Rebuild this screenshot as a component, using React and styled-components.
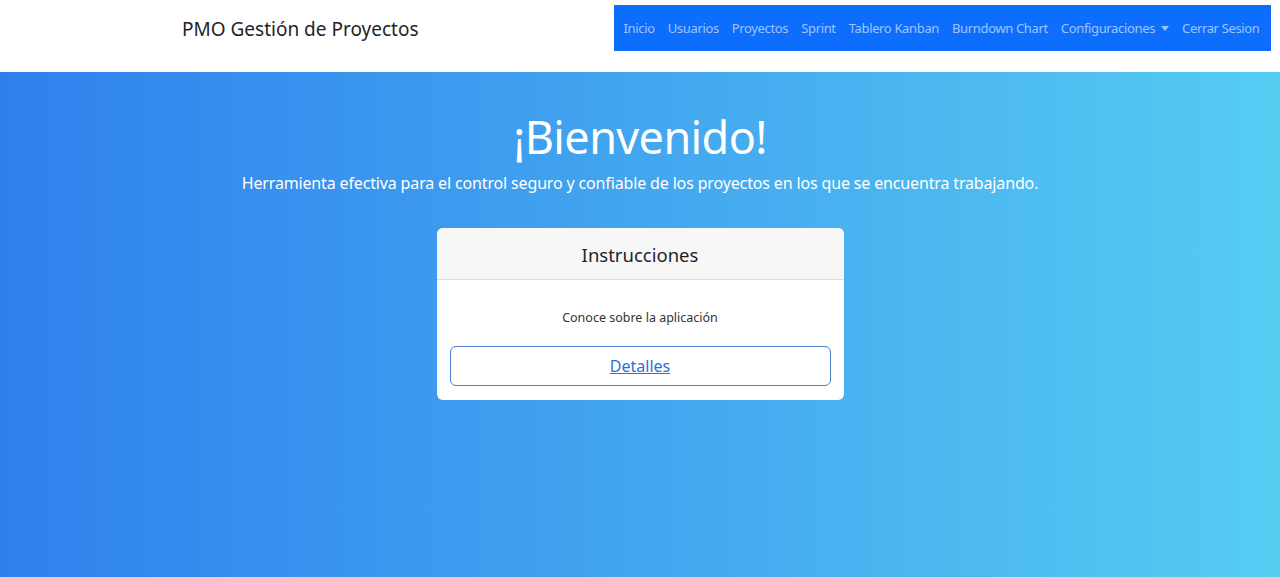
import styled, { createGlobalStyle } from "styled-components"

const Global = createGlobalStyle`
    html, body { margin: 0; padding: 0; }
    body {
        font-family: "Noto Sans", "Open Sans", sans-serif;
        color: #212529;
        background: #fff;
    }
    * { box-sizing: border-box; }
`

const Page = styled.div`
    min-height: 577px;
    display: flex;
    flex-direction: column;
`

const Header = styled.header`
    height: 72px;
    background: #fff;
    display: flex;
    align-items: flex-start;
    padding-left: 182px;
    padding-right: 9px;
    box-shadow: 0 1px 2px rgba(0,0,0,0.08);
`

const Brand = styled.a`
    font-size: 19px;
    color: #212529;
    text-decoration: none;
    line-height: 58px;
    white-space: nowrap;
`

const Nav = styled.nav`
    margin-left: auto;
    margin-top: 5px;
    height: 46px;
    background: #0d6efd;
    display: flex;
    align-items: center;
    padding: 0 5px 0 3px;
`

const NavLink = styled.a`
    font-size: 13px;
    letter-spacing: -0.35px;
    color: rgba(255,255,255,0.6);
    padding: 0 6.5px;
    text-decoration: none;
    white-space: nowrap;
    display: flex;
    align-items: center;
    gap: 6px;
`

const Caret = styled.span`
    display: inline-block;
    border-top: 5px solid rgba(255,255,255,0.6);
    border-left: 4px solid transparent;
    border-right: 4px solid transparent;
`

const Hero = styled.main`
    flex: 1;
    background: linear-gradient(to right, #2f80ed, #56ccf2);
    display: flex;
    flex-direction: column;
    align-items: center;
    padding-top: 37px;
    color: #fff;
`

const Title = styled.h1`
    margin: 0;
    font-size: 45px;
    font-weight: 400;
    line-height: 56px;
    letter-spacing: -0.6px;
`

const Lead = styled.p`
    margin: 7px 0 0;
    font-size: 16px;
    letter-spacing: -0.15px;
`

const Card = styled.section`
    margin-top: 34px;
    width: 407px;
    background: #fff;
    border-radius: 6px;
    overflow: hidden;
    color: #212529;
`

const CardHeader = styled.div`
    height: 52px;
    padding-top: 2px;
    background: #f7f7f7;
    border-bottom: 1px solid #dcdcdc;
    display: flex;
    align-items: center;
    justify-content: center;
    font-size: 18.5px;
`

const CardBody = styled.div`
    padding: 29px 13px 14px;
    display: flex;
    flex-direction: column;
    align-items: center;
`

const CardText = styled.p`
    margin: 0 0 20px;
    font-size: 12.5px;
    color: #333;
`

const OutlineButton = styled.a`
    width: 100%;
    height: 40px;
    border: 1px solid #4a7fd0;
    border-radius: 6px;
    display: flex;
    align-items: center;
    justify-content: center;
    font-size: 16px;
    color: #2f6fd6;
    text-decoration: underline;
`

const links = ["Inicio", "Usuarios", "Proyectos", "Sprint", "Tablero Kanban", "Burndown Chart"]

export default function App() {
    return <Page>
        <Global />
        <Header>
            <Brand href="#">PMO Gestión de Proyectos</Brand>
            <Nav>
                {links.map((l, i) => <NavLink key={i} href="#">{l}</NavLink>)}
                <NavLink href="#">Configuraciones <Caret /></NavLink>
                <NavLink href="#">Cerrar Sesion</NavLink>
            </Nav>
        </Header>
        <Hero>
            <Title>¡Bienvenido!</Title>
            <Lead>Herramienta efectiva para el control seguro y confiable de los proyectos en los que se encuentra trabajando.</Lead>
            <Card>
                <CardHeader>Instrucciones</CardHeader>
                <CardBody>
                    <CardText>Conoce sobre la aplicación</CardText>
                    <OutlineButton href="#">Detalles</OutlineButton>
                </CardBody>
            </Card>
        </Hero>
    </Page>
}
